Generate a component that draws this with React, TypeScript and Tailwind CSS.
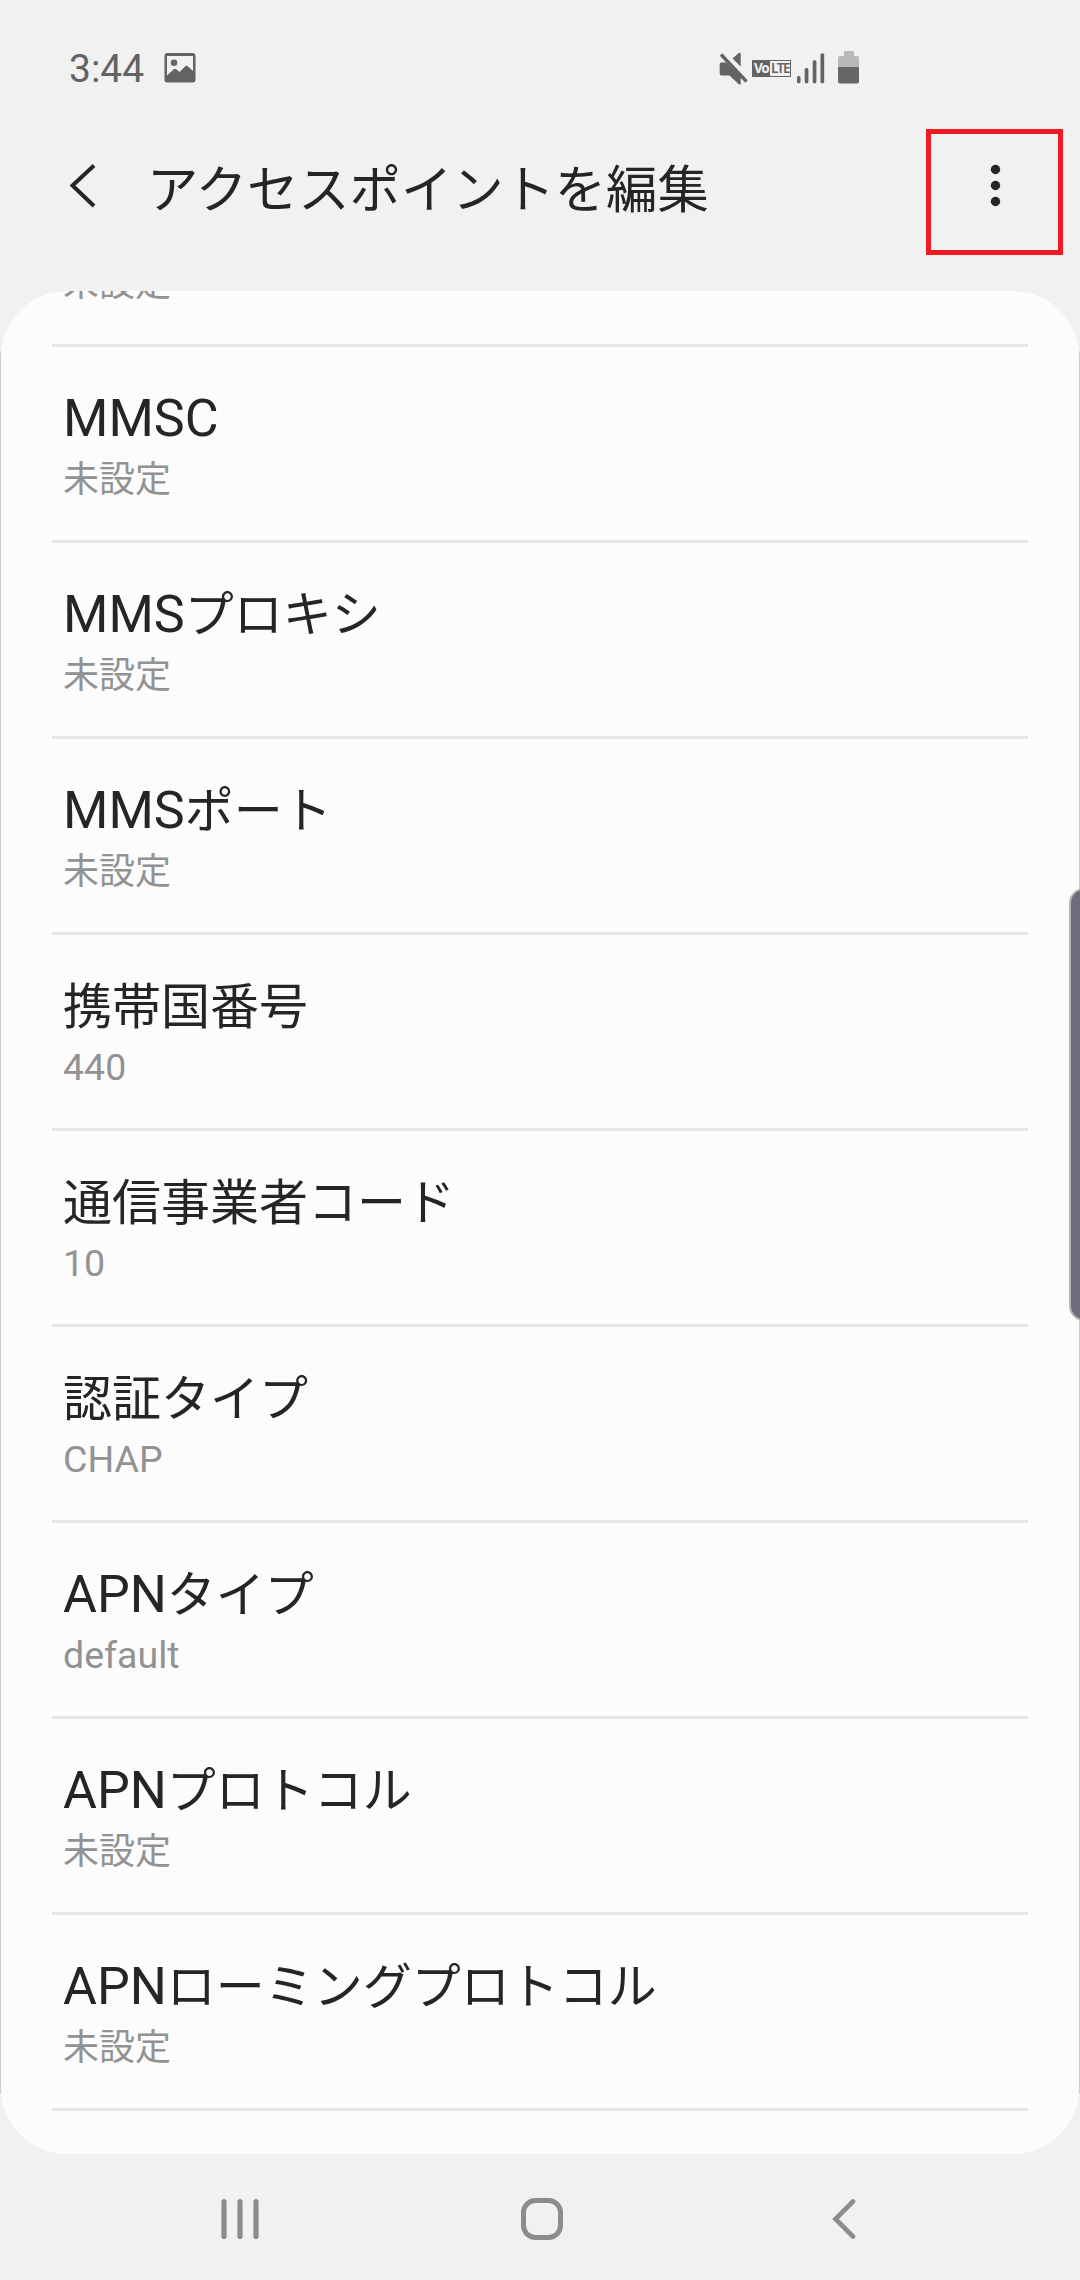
interface ApnField {
  latin?: string;
  label?: string;
  value: string;
  latinValue?: boolean;
}

const fields: ApnField[] = [
  { latin: "MMSC", value: "未設定" },
  { latin: "MMS", label: "プロキシ", value: "未設定" },
  { latin: "MMS", label: "ポート", value: "未設定" },
  { label: "携帯国番号", value: "440", latinValue: true },
  { label: "通信事業者コード", value: "10", latinValue: true },
  { label: "認証タイプ", value: "CHAP", latinValue: true },
  { latin: "APN", label: "タイプ", value: "default", latinValue: true },
  { latin: "APN", label: "プロトコル", value: "未設定" },
  { latin: "APN", label: "ローミングプロトコル", value: "未設定" },
];

function StatusBar() {
  return (
    <div className="flex h-[130px] items-start text-[#636363]">
      <span className="ml-[69px] mt-[46px] w-[76px] text-[39px] leading-[47px] whitespace-nowrap">3:44</span>
      <svg className="ml-[19px] mt-[53px] h-[30px] w-8" viewBox="0 0 32 30" fill="currentColor">
        <path
          fillRule="evenodd"
          d="M3 0H28.5Q31.5 0 31.5 3V26.500Q31.500 29.500 28.500 29.500H3Q.5 29.500 .5 26.500V3Q.5 0 3 0ZM3 3V22.500L9.500 16.500Q11 15 12.500 16.500L15.500 19L21 13.500Q22.500 12 24 13.500L29 18V3Z"
        />
        <circle cx="10" cy="9.700" r="3.300" />
      </svg>
      <svg className="ml-[523px] mt-[52px] h-[34px] w-[30px]" viewBox="0 0 30 34" fill="currentColor">
        <path d="M21.700 1V14.500L13.500 6.500L19.500 1.200Q21 .2 21.700 1ZM2.500 10.500H7L21.700 24.500V32Q21 33 19.500 32L10.500 23.500H2.500Q.7 23.500 .7 21.500V12.500Q.7 10.500 2.500 10.500Z" />
        <path d="M2 2.500L27.500 29.500" stroke="currentColor" strokeWidth="3.300" fill="none" />
      </svg>
      <div className="ml-[3px] mt-[60px] flex h-[17px] w-[39px] border border-[#636363] bg-[#636363] font-['Noto_Sans'] text-[13.5px] leading-[15px] font-bold whitespace-nowrap">
        <span className="w-[17px] pl-px tracking-[-1.3px] text-[#f1f1f1]">Vo</span>
        <span className="flex-1 bg-[#f1f1f1] pl-px font-semibold tracking-[-1.4px]">LTE</span>
      </div>
      <svg className="ml-1.5 mt-[53px] h-[31px] w-7" viewBox="0 0 28 31" fill="currentColor">
        <rect x="0" y="23" width="3.500" height="7.300" rx="1.500" />
        <rect x="7.700" y="15" width="3.700" height="15.300" rx="1.500" />
        <rect x="15.700" y="7.300" width="3.700" height="23" rx="1.500" />
        <rect x="23.500" y=".3" width="3.700" height="30" rx="1.500" />
      </svg>
      <svg className="ml-[13px] mt-[51px] h-[33px] w-[22px]" viewBox="0 0 22 33">
        <path d="M7 0H15Q16 0 16 1V5H19Q21 5 21 7V16H0V7Q0 5 2 5H6V1Q6 0 7 0Z" fill="#b9b9b9" />
        <path d="M0 16H21V30.500Q21 32.500 19 32.500H2Q0 32.500 0 30.500Z" fill="#666666" />
      </svg>
    </div>
  );
}

function Header() {
  return (
    <header className="flex h-[161px] items-start text-[#252525]">
      <svg className="ml-[68px] mt-[34px] h-[44px] w-[30px]" viewBox="0 0 30 44" fill="none" stroke="currentColor" strokeWidth="4">
        <path d="M26 1.500L4.500 21.500L26 42" />
      </svg>
      <h1 className="ml-[49px] mt-[24px] w-[702px] font-['Noto_Sans_CJK_JP',sans-serif] text-[51.3px] leading-[64px]">
        アクセスポイントを編集
      </h1>
      <button className="ml-[77px] -mt-px flex h-[126px] w-[137px] justify-center border-[5px] border-[#ee1c24]">
        <svg className="mt-[30px] h-[44px] w-3" viewBox="0 0 12 44" fill="currentColor">
          <circle cx="6.500" cy="5.500" r="4.700" />
          <circle cx="6.500" cy="21.500" r="4.700" />
          <circle cx="6.500" cy="37.500" r="4.700" />
        </svg>
      </button>
    </header>
  );
}

function FieldValue({ value, latinValue }: { value: string; latinValue?: boolean }) {
  return (
    <p className="text-[37.5px] leading-[48px] text-[#929292]">
      {latinValue ? (
        value
      ) : (
        <span className="font-['Noto_Sans_CJK_JP',sans-serif] text-[36px] leading-[0]">{value}</span>
      )}
    </p>
  );
}

function FieldRow({ latin, label, value, latinValue }: ApnField) {
  return (
    <li className="flex h-[196px] flex-col gap-1 border-b-[3px] border-[#e6e6e6] pt-[40px] pl-[11px]">
      <h2 className="text-[52px] leading-[64px] whitespace-nowrap text-[#252525]">
        {latin}
        {label && <span className="font-['Noto_Sans_CJK_JP',sans-serif] text-[49px] leading-[0]">{label}</span>}
      </h2>
      <FieldValue value={value} latinValue={latinValue} />
    </li>
  );
}

function NavBar() {
  return (
    <nav className="flex h-[126px] items-start text-[#8c8c8c]">
      <svg className="ml-[221px] mt-[45px] h-10 w-[38px]" viewBox="0 0 38 40" fill="currentColor">
        <rect x=".4" y="0" width="5.200" height="40" rx="2.600" />
        <rect x="16.400" y="0" width="5.200" height="40" rx="2.600" />
        <rect x="32.400" y="0" width="5.200" height="40" rx="2.600" />
      </svg>
      <svg className="ml-[262px] mt-[44px] h-[42px] w-[42px]" viewBox="0 0 42 42" fill="none" stroke="currentColor" strokeWidth="5">
        <rect x="2.500" y="2.500" width="37" height="37" rx="12" />
      </svg>
      <svg
        className="ml-[269px] mt-[45px] h-10 w-6"
        viewBox="0 0 24 40"
        fill="none"
        stroke="currentColor"
        strokeWidth="4.600"
        strokeLinecap="round"
      >
        <path d="M21 2.500L3.500 20L21 37.500" />
      </svg>
    </nav>
  );
}

export default function App() {
  return (
    <div className="relative h-[2280px] w-[1080px] overflow-hidden bg-[#f1f1f1] font-['Roboto',sans-serif]">
      <StatusBar />
      <Header />
      <main className="relative">
        <div className="absolute top-[60px] bottom-[60px] left-0 w-full bg-[#cfcfcf]" />
        <div className="relative mx-px h-[1863px] overflow-hidden rounded-[66px] bg-[#fcfcfc] px-[51px]">
          {/* row scrolled under the header */}
          <div className="flex h-14 flex-col justify-end border-b-[3px] border-[#e6e6e6] pb-[37px] pl-[11px]">
            <FieldValue value="未設定" />
          </div>
          <ul>
            {fields.map((field) => (
              <FieldRow key={`${field.latin ?? ""}${field.label ?? ""}`} {...field} />
            ))}
          </ul>
        </div>
      </main>
      <NavBar />
      {/* edge panel handle */}
      <div className="absolute top-[888px] left-[1069px] h-[433px] w-8 rounded-[15px] border-2 border-[#b5b5b8] bg-[#6f6d7b]" />
    </div>
  );
}
